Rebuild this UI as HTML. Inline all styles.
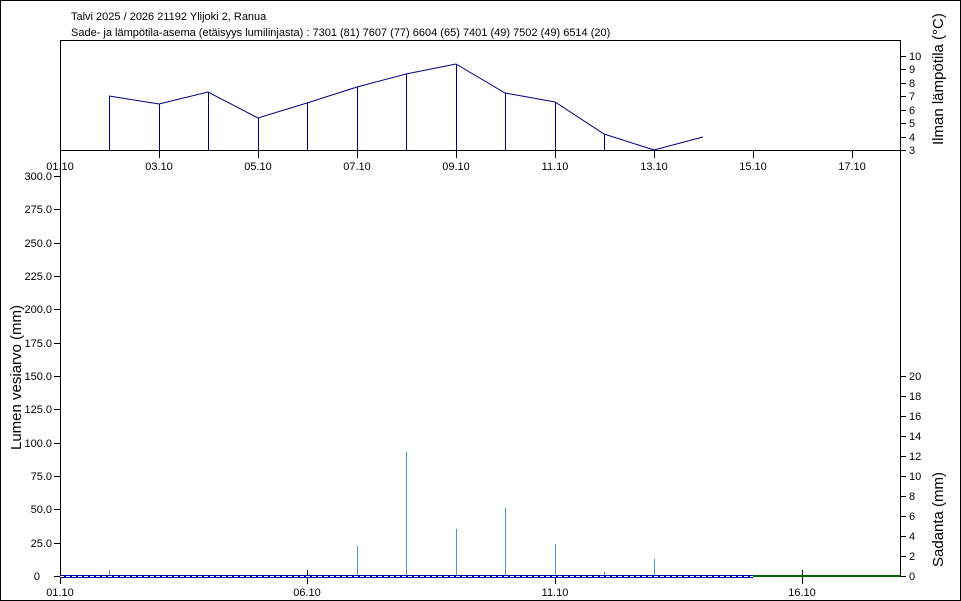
<!DOCTYPE html>
<html><head><meta charset="utf-8"><style>
html,body{margin:0;padding:0;background:#fff;}
svg{display:block;font-family:"Liberation Sans",Arial,sans-serif;}
text{font-size:11px;fill:#000;}
</style></head><body>
<svg width="961" height="601" viewBox="0 0 961 601" xmlns="http://www.w3.org/2000/svg">
<rect x="0.5" y="0.5" width="960" height="600" fill="#fff" stroke="#000"/>
<text x="71" y="20">Talvi 2025 / 2026 21192 Ylijoki 2, Ranua</text>
<text x="71" y="36">Sade- ja lämpötila-asema (etäisyys lumilinjasta) :  7301 (81) 7607 (77) 6604 (65) 7401 (49) 7502 (49) 6514 (20)</text>
<!-- top plot frame -->
<g stroke="#000" fill="none" shape-rendering="crispEdges">
<path d="M60.5 150V40.5H900.5V576"/>
<path d="M60 150.5H900"/>
<path d="M60.5 150V576.5"/>
<path d="M60 576.5H900"/>
</g>
<!-- top x ticks -->
<g stroke="#000" shape-rendering="crispEdges">
<path d="M60.5 150v8M159.5 150v8M258.5 150v8M357.5 150v8M456.5 150v8M555.5 150v8M654.5 150v8M753.5 150v8M852.5 150v8"/>
<path d="M900 56.5h6M900 69.5h6M900 83.5h6M900 96.5h6M900 110.5h6M900 123.5h6M900 137.5h6M900 150.5h6"/>
<path d="M54 176.5h6M54 209.5h6M54 243.5h6M54 276.5h6M54 309.5h6M54 343.5h6M54 376.5h6M54 409.5h6M54 443.5h6M54 476.5h6M54 509.5h6M54 543.5h6M54 576.5h6"/>
<path d="M900 376.5h6M900 396.5h6M900 416.5h6M900 436.5h6M900 456.5h6M900 476.5h6M900 496.5h6M900 516.5h6M900 536.5h6M900 556.5h6M900 576.5h6"/>
<path d="M60.5 576v8M307.5 570v14M555.5 570v14M802.5 570v14"/>
</g>
<g text-anchor="middle">
<text x="60" y="170">01.10</text><text x="159" y="170">03.10</text><text x="258" y="170">05.10</text><text x="357" y="170">07.10</text><text x="456" y="170">09.10</text><text x="555" y="170">11.10</text><text x="654" y="170">13.10</text><text x="753" y="170">15.10</text><text x="852" y="170">17.10</text>
<text x="60" y="596">01.10</text><text x="307" y="596">06.10</text><text x="555" y="596">11.10</text><text x="802" y="596">16.10</text>
</g>
<g text-anchor="end">
<text x="52" y="180">300.0</text><text x="52" y="213">275.0</text><text x="52" y="247">250.0</text><text x="52" y="280">225.0</text><text x="52" y="313">200.0</text><text x="52" y="347">175.0</text><text x="52" y="380">150.0</text><text x="52" y="413">125.0</text><text x="52" y="447">100.0</text><text x="52" y="480">75.0</text><text x="52" y="513">50.0</text><text x="52" y="547">25.0</text><text x="40" y="580">0</text>
</g>
<g>
<text x="909" y="60">10</text><text x="909" y="73">9</text><text x="909" y="87">8</text><text x="909" y="100">7</text><text x="909" y="114">6</text><text x="909" y="127">5</text><text x="909" y="141">4</text><text x="909" y="154">3</text>
<text x="909" y="380">20</text><text x="909" y="400">18</text><text x="909" y="420">16</text><text x="909" y="440">14</text><text x="909" y="460">12</text><text x="909" y="480">10</text><text x="909" y="500">8</text><text x="909" y="520">6</text><text x="909" y="540">4</text><text x="909" y="560">2</text><text x="909" y="580">0</text>
</g>
<text transform="translate(943,145) rotate(-90)" style="font-size:15px">Ilman lämpötila (°C)</text>
<text transform="translate(943,567) rotate(-90)" style="font-size:15px">Sadanta (mm)</text>
<text transform="translate(21,450) rotate(-90)" style="font-size:15px">Lumen vesiarvo (mm)</text>
<!-- temperature -->
<g stroke="#000080" fill="none" shape-rendering="crispEdges">
<path d="M109.5 96V150M159.5 104V150M208.5 92V150M258.5 118V150M307.5 103V150M357.5 87V150M406.5 74V150M456.5 64V150M505.5 93V150M555.5 102V150M604.5 134V150"/>
</g>
<polyline fill="none" stroke="#000080" points="109,96 159,104 208,92 258,118 307,103 357,87 406,74 456,64 505,93 555,102 604,134 654,150 703,137"/>
<!-- precip -->
<g stroke="#4a90e2" shape-rendering="crispEdges">
<path d="M109.5 570V576M357.5 546V576M406.5 452V576M456.5 529V576M505.5 508V576M555.5 544V576M604.5 572V576M654.5 559V576"/>
</g>
<rect x="60" y="575" width="693" height="3" fill="#0000a0"/>
<line x1="60" y1="576.5" x2="753" y2="576.5" stroke="#fff" stroke-dasharray="4,2" shape-rendering="crispEdges"/>
<rect x="753" y="575" width="147" height="2" fill="#006400"/>
</svg>
</body></html>
